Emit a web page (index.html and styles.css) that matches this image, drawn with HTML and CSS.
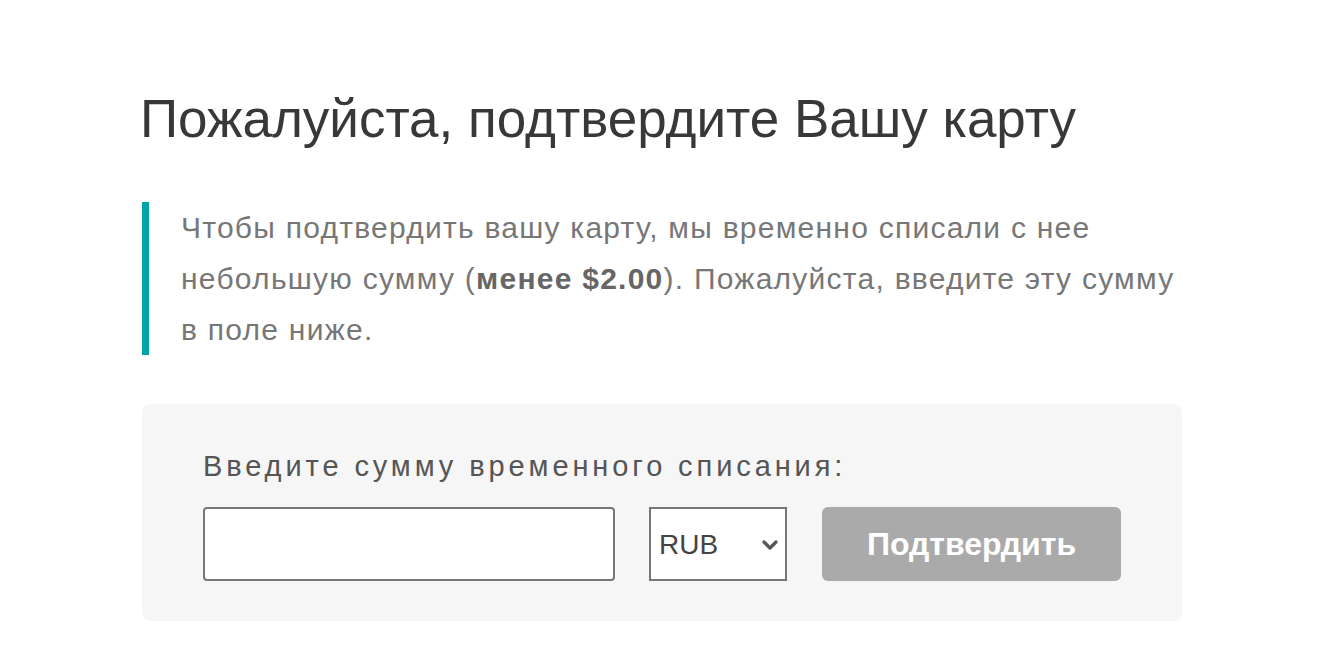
FILE: index.html
```html
<!DOCTYPE html>
<html lang="ru">
  <head>
    <meta charset="UTF-8" />
    <meta name="viewport" content="width=device-width, initial-scale=1.0" />
    <title>Подтверждение карты</title>
    <link rel="stylesheet" href="styles.css">
  </head>
  <body>
    <main class="verify">
      <h1 class="verify__title">Пожалуйста, подтвердите Вашу карту</h1>
      <blockquote class="verify__note">
        Чтобы подтвердить вашу карту, мы временно списали с нее небольшую сумму (<strong>менее $2.00</strong>). Пожалуйста, введите эту сумму в поле ниже.
      </blockquote>
      <form class="verify__form">
        <label class="verify__label" for="amount">Введите сумму временного списания:</label>
        <div class="verify__row">
          <input id="amount" class="verify__input" type="text" />
          <div class="verify__select">
            <select>
              <option>RUB</option>
              <option>USD</option>
              <option>EUR</option>
            </select>
            <svg class="verify__chevron" viewBox="0 0 16 10" width="16" height="10">
              <path d="M2 2 L8 8 L14 2" fill="none" stroke="#555" stroke-width="3.2" stroke-linecap="round" stroke-linejoin="round" />
            </svg>
          </div>
          <button class="verify__button" type="button" disabled>Подтвердить</button>
        </div>
      </form>
    </main>
  </body>
</html>
```

FILE: styles.css
```css
* {
  box-sizing: border-box;
}

body {
  margin: 0;
  background: #ffffff;
  font-family: "Liberation Sans", Arial, Helvetica, sans-serif;
  color: #333;
}

.verify {
  width: 1040px;
  margin-left: 142px;
  padding-top: 86px;
}

.verify__title {
  margin: 0;
  margin-left: -2px;
  font-size: 53px;
  font-weight: 300;
  line-height: 66px;
  color: #383838;
}

.verify__note {
  margin: 50px 0 0;
  padding: 0 0 0 32px;
  border-left: 7px solid #00a3a6;
  font-size: 30px;
  letter-spacing: 1.25px;
  line-height: 51px;
  color: #777;
}

.verify__note strong {
  color: #666;
}

.verify__form {
  margin-top: 49px;
  padding: 40px 60px 40px 61px;
  background: #f6f6f6;
  border-radius: 8px;
}

.verify__label {
  display: block;
  font-size: 29px;
  letter-spacing: 3.9px;
  line-height: 44px;
  color: #555;
}

.verify__row {
  display: flex;
  margin-top: 19px;
}

.verify__input {
  width: 412px;
  height: 74px;
  border: 2px solid #777;
  border-radius: 4px;
  background: #fff;
  font-size: 28px;
  padding: 0 12px;
}

.verify__select {
  position: relative;
  margin-left: 34px;
}

.verify__select select {
  width: 138px;
  height: 74px;
  border: 2px solid #777;
  border-radius: 0;
  background: #fff;
  appearance: none;
  -webkit-appearance: none;
  font-family: "Liberation Sans", Arial, sans-serif;
  font-size: 28px;
  color: #444;
  padding: 0 0 0 8px;
}

.verify__chevron {
  position: absolute;
  right: 9px;
  top: 33px;
  pointer-events: none;
}

.verify__button {
  width: 299px;
  height: 74px;
  margin-left: 35px;
  border: 0;
  border-radius: 6px;
  background: #aaa;
  color: #fff;
  font-family: "Liberation Sans", Arial, sans-serif;
  font-size: 32px;
  font-weight: bold;
}
```
